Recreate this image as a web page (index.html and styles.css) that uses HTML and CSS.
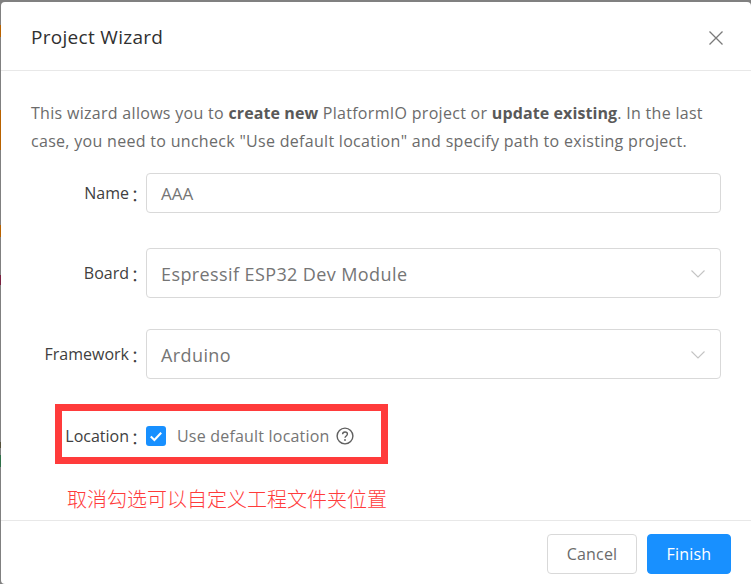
FILE: index.html
```html
<!DOCTYPE html>
<html lang="en">
<head>
<meta charset="utf-8">
<title>Project Wizard</title>
<link rel="stylesheet" href="styles.css">
</head>
<body>
<div class="backdrop">
  <div class="modal">
    <header class="modal-header">
      <h1 class="modal-title">Project Wizard</h1>
      <svg class="close-icon" width="16" height="16" viewBox="0 0 16 16" aria-hidden="true"><path d="M1.5 1.5 14.5 14.5M14.5 1.5 1.5 14.5" fill="none" stroke="#7a7a7a" stroke-width="1.3"/></svg>
    </header>
    <main class="modal-body">
      <p class="intro">This wizard allows you to <strong>create new</strong> PlatformIO project or <strong>update existing</strong>. In the last case, you need to uncheck "Use default location" and specify path to existing project.</p>
      <form class="form">
        <div class="form-row row-name">
          <label class="form-label">Name</label>
          <div class="control input-control">AAA</div>
        </div>
        <div class="form-row row-board">
          <label class="form-label">Board</label>
          <div class="control select-control">
            <span>Espressif ESP32 Dev Module</span>
            <svg class="chevron" width="14" height="8" viewBox="0 0 14 8" aria-hidden="true"><path d="M.5.5 7 7 13.5.5" fill="none" stroke="#c4c4c4" stroke-width="1.1"/></svg>
          </div>
        </div>
        <div class="form-row row-framework">
          <label class="form-label">Framework</label>
          <div class="control select-control">
            <span>Arduino</span>
            <svg class="chevron" width="14" height="8" viewBox="0 0 14 8" aria-hidden="true"><path d="M.5.5 7 7 13.5.5" fill="none" stroke="#c4c4c4" stroke-width="1.1"/></svg>
          </div>
        </div>
        <div class="form-row row-location">
          <label class="form-label">Location</label>
          <div class="check-control">
            <span class="checkbox"><svg width="14" height="11" viewBox="0 0 14 11" aria-hidden="true"><path d="M1.8 5.6 5.4 9 12.2 1.8" fill="none" stroke="#fff" stroke-width="2.1"/></svg></span>
            <span class="check-text">Use default location</span>
            <svg class="help-icon" width="18" height="18" viewBox="0 0 18 18" aria-hidden="true"><circle cx="9" cy="9" r="7.9" fill="none" stroke="#5f5f5f" stroke-width="1.4"/><path d="M6.6 7.2C6.6 5.8 7.7 5 9 5s2.4.8 2.4 2.1c0 1.9-2.4 1.9-2.4 3.7" fill="none" stroke="#5f5f5f" stroke-width="1.4"/><circle cx="9" cy="13" r=".9" fill="#5f5f5f"/></svg>
          </div>
          <div class="annotation-box"></div>
        </div>
        <p class="annotation-note">取消勾选可以自定义工程文件夹位置</p>
      </form>
    </main>
    <footer class="modal-footer">
      <button class="btn btn-default" type="button">Cancel</button>
      <button class="btn btn-primary" type="button">Finish</button>
    </footer>
  </div>
</div>
</body>
</html>
```
FILE: styles.css
```css
* { box-sizing: border-box; }
html, body { margin: 0; height: 100%; }
body {
  font-family: "Open Sans", "Noto Sans", "Noto Sans CJK SC", sans-serif;
  color: #595959;
  overflow: hidden;
}
.backdrop {
  height: 584px;
  padding: 2px 0 0 1px;
  background-color: #808080;
  background-image: linear-gradient(to bottom,
    transparent 25px, #b86200 25px, #b86200 37px,
    transparent 37px, transparent 110px, #b86200 110px, #b86200 150px,
    transparent 150px, transparent 225px, #b86200 225px, #b86200 237px,
    transparent 237px, transparent 275px, #7a2040 275px, #7a2040 285px,
    transparent 285px, transparent 442px, #55503a 442px, #55503a 448px,
    transparent 448px, transparent 455px, #2e7048 455px, #2e7048 467px,
    transparent 467px);
  background-size: 1px 100%;
  background-repeat: no-repeat;
}
.modal {
  width: 750px;
  height: 582px;
  background: #fff;
  border-radius: 4px 4px 0 4px;
  display: flex;
  flex-direction: column;
}
.modal-header {
  height: 69px;
  flex: none;
  padding: 2px 27px 0 30px;
  border-bottom: 1px solid #e8e8e8;
  display: flex;
  align-items: center;
  justify-content: space-between;
}
.modal-title {
  margin: 0;
  font-size: 19px;
  font-weight: 500;
  letter-spacing: .3px;
  line-height: 26px;
  color: #303030;
}
.close-icon { display: block; margin-top: 2px; }
.modal-body {
  flex: 1;
  padding: 28px 30px 0;
}
.intro {
  margin: 0;
  font-size: 16px;
  line-height: 28px;
  letter-spacing: .3px;
  color: #6b6b6b;
}
.intro strong { font-weight: 700; color: #595959; letter-spacing: .1px; }
.form { margin-top: 18px; }
.form-row { display: flex; align-items: center; position: relative; }
.row-board { margin-top: 35px; }
.row-framework { margin-top: 31px; }
.row-location { margin-top: 37px; height: 40px; }
.form-label {
  width: 115px;
  flex: none;
  text-align: right;
  font-size: 16px;
  color: #404040;
  padding-right: 17px;
  position: relative;
}
.form-label::after {
  content: "\FF1A";
  position: absolute;
  right: -1px;
  font-family: "Noto Sans CJK SC", sans-serif;
}
.control {
  width: 575px;
  border: 1px solid #d9d9d9;
  border-radius: 4px;
  padding: 0 14px;
  font-size: 18px;
  letter-spacing: .4px;
  color: #757575;
  display: flex;
  align-items: center;
  justify-content: space-between;
}
.input-control { height: 40px; font-size: 17px; letter-spacing: 0; }
.select-control { height: 50px; padding-top: 1px; }
.chevron { display: block; margin-right: 1px; }
.check-control { display: flex; align-items: center; font-size: 16px; letter-spacing: .2px; color: #757575; }
.checkbox {
  width: 20px;
  height: 20px;
  background: #1890ff;
  border-radius: 3px;
  display: flex;
  align-items: center;
  justify-content: center;
}
.check-text { margin-left: 11px; }
.help-icon { margin-left: 6px; display: block; }
.annotation-box {
  position: absolute;
  left: 24px;
  top: -12px;
  width: 333px;
  height: 60px;
  border: 7px solid #ff3b3b;
}
.annotation-note {
  margin: 29px 0 0 36px;
  font-family: "Noto Sans CJK SC", sans-serif;
  font-size: 20px;
  font-weight: 300;
  line-height: 28px;
  color: #ff3b3b;
}
.modal-footer {
  height: 64px;
  flex: none;
  border-top: 1px solid #e8e8e8;
  padding: 13px 20px 0 0;
  display: flex;
  justify-content: flex-end;
  gap: 10px;
}
.btn {
  height: 40px;
  border-radius: 4px;
  font-family: inherit;
  font-size: 16px;
  letter-spacing: .2px;
  padding: 0;
}
.btn-default { width: 90px; background: #fff; border: 1px solid #d9d9d9; color: #6b6b6b; }
.btn-primary { width: 84px; background: #1890ff; border: 1px solid #1890ff; color: #fff; }
```
